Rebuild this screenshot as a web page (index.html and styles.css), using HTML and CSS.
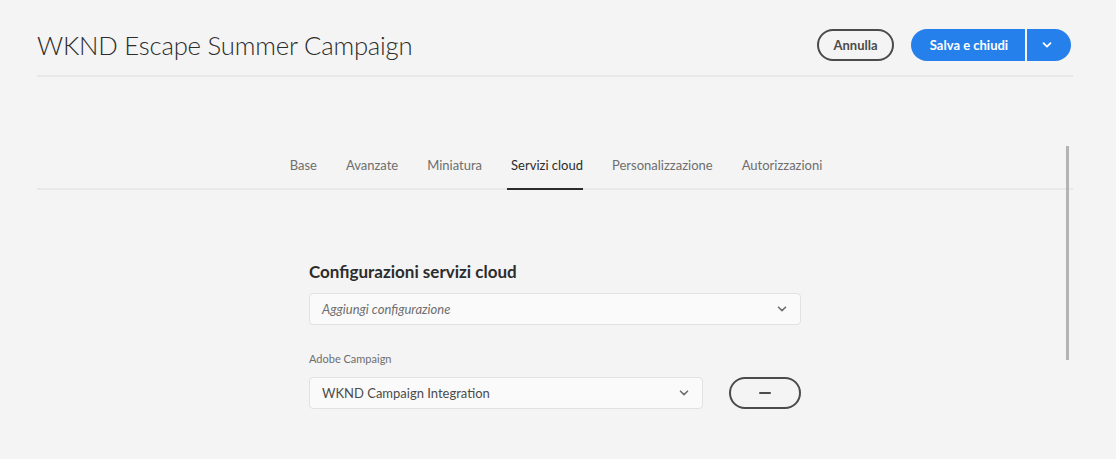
FILE: index.html
```html
<!DOCTYPE html>
<html lang="it">
<head>
<meta charset="utf-8">
<title>WKND Escape Summer Campaign</title>
<link rel="stylesheet" href="styles.css">
</head>
<body>
<div class="page">
  <header class="header">
    <h1 class="title">WKND Escape Summer Campaign</h1>
    <div class="actions">
      <button class="btn btn-outline">Annulla</button>
      <div class="split">
        <button class="btn-cta">Salva e chiudi</button>
        <button class="btn-cta-more" aria-label="Altro">
          <svg width="12" height="12" viewBox="0 0 12 12"><path d="M2.5 4.2 6 7.6 9.5 4.2" fill="none" stroke="#fff" stroke-width="1.8" stroke-linecap="round" stroke-linejoin="round"/></svg>
        </button>
      </div>
    </div>
  </header>

  <div class="content">
    <nav class="tabs">
      <span class="tab">Base</span>
      <span class="tab">Avanzate</span>
      <span class="tab">Miniatura</span>
      <span class="tab active">Servizi cloud</span>
      <span class="tab">Personalizzazione</span>
      <span class="tab">Autorizzazioni</span>
    </nav>

    <section class="form">
      <h2 class="section-title">Configurazioni servizi cloud</h2>
      <div class="select wide">
        <span class="placeholder">Aggiungi configurazione</span>
        <svg class="chev" width="12" height="12" viewBox="0 0 12 12"><path d="M2.5 4.2 6 7.6 9.5 4.2" fill="none" stroke="#6e6e6e" stroke-width="1.6" stroke-linecap="round" stroke-linejoin="round"/></svg>
      </div>
      <label class="field-label">Adobe Campaign</label>
      <div class="row">
        <div class="select narrow">
          <span class="value">WKND Campaign Integration</span>
          <svg class="chev" width="12" height="12" viewBox="0 0 12 12"><path d="M2.5 4.2 6 7.6 9.5 4.2" fill="none" stroke="#6e6e6e" stroke-width="1.6" stroke-linecap="round" stroke-linejoin="round"/></svg>
        </div>
        <button class="btn btn-outline btn-minus" aria-label="Rimuovi">
          <svg width="14" height="4" viewBox="0 0 14 4"><rect x="1" y="1" width="12" height="2" rx="1" fill="#4b4b4b"/></svg>
        </button>
      </div>
    </section>
    <div class="scrollbar"></div>
  </div>
</div>
</body>
</html>
```

FILE: styles.css
```css
* { box-sizing: border-box; }
html, body { margin: 0; padding: 0; }
body {
  background: #f4f4f4;
  font-family: Lato, "Open Sans", sans-serif;
  color: #4b4b4b;
  width: 1116px;
  height: 459px;
  overflow: hidden;
}
.page { padding: 0 43px 0 37px; }

.header {
  display: flex;
  justify-content: space-between;
  align-items: center;
  height: 77px;
  padding-top: 14px;
  border-bottom: 2px solid #e8e8e8;
}
.title {
  margin: 0;
  font-weight: 300;
  font-size: 25.7px;
  color: #2c2c2c;
  letter-spacing: -0.2px;
}
.actions { display: flex; align-items: center; gap: 17px; padding-right: 2px; }

.btn {
  font-family: inherit;
  background: transparent;
  cursor: pointer;
}
.btn-outline {
  height: 32px;
  border: 2px solid #4b4b4b;
  border-radius: 16px;
  padding: 0 14px;
  font-size: 13px;
  font-weight: 700;
  color: #4b4b4b;
  width: 77px;
}
.split { display: flex; height: 32px; }
.btn-cta, .btn-cta-more {
  border: none;
  background: #2680eb;
  color: #fff;
  font-family: inherit;
  font-weight: 700;
  font-size: 13px;
  height: 32px;
}
.btn-cta {
  width: 114px;
  border-radius: 16px 0 0 16px;
  padding: 0 0 0 2px;
}
.btn-cta-more {
  width: 44px;
  margin-left: 2px;
  border-radius: 0 16px 16px 0;
  display: flex;
  align-items: center;
  justify-content: center;
  padding: 0 4px 0 0;
}

.content { position: relative; padding-top: 70px; }
.tabs {
  display: flex;
  justify-content: center;
  border-bottom: 2px solid #e8e8e8;
  height: 43px;
  padding-left: 1px;
}
.tab {
  font-size: 13px;
  color: #6e6e6e;
  padding: 10px 0 0;
  margin: 0 14px 0 15px;
  height: 43px;
}
.tab.active {
  color: #2c2c2c;
  border-bottom: 2px solid #2c2c2c;
  padding-left: 4px;
  margin-left: 11px;
}

.form {
  width: 492px;
  margin: 71px auto 0;
}
.section-title {
  margin: 0 0 10px;
  font-size: 17px;
  font-weight: 700;
  color: #2c2c2c;
  line-height: 22px;
}
.select {
  height: 32px;
  background: #fafafa;
  border: 1px solid #e1e1e1;
  border-radius: 4px;
  display: flex;
  align-items: center;
  justify-content: space-between;
  padding: 0 12px 0 12px;
  font-size: 13px;
}
.select.wide { width: 492px; }
.select.narrow { width: 394px; }
.placeholder { font-style: italic; color: #6e6e6e; }
.value { color: #4b4b4b; }
.chev { display: block; }
.field-label {
  display: block;
  margin: 27px 0 11px;
  font-size: 11px;
  color: #6e6e6e;
  line-height: 14px;
}
.row { display: flex; align-items: center; gap: 26px; }
.btn-minus {
  width: 72px;
  display: flex;
  align-items: center;
  justify-content: center;
  padding: 0;
}

.scrollbar {
  position: absolute;
  right: 4px;
  top: 69px;
  width: 3px;
  height: 214px;
  background: #b3b3b3;
}
```
